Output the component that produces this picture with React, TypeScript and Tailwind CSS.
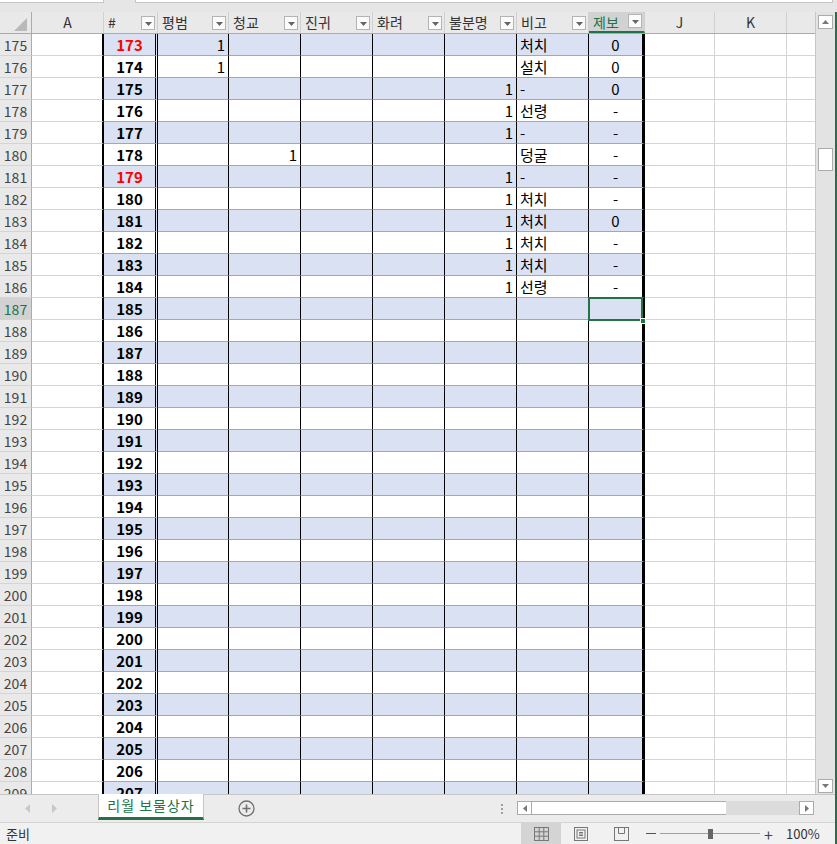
import React from 'react';

type Rec = { r: number; n: number; red?: boolean; p?: string; c?: string; u?: string; note?: string; rep?: string };

const data: Rec[] = [
  { r: 175, n: 173, red: true, p: '1', note: '처치', rep: '0' },
  { r: 176, n: 174, p: '1', note: '설치', rep: '0' },
  { r: 177, n: 175, u: '1', note: '-', rep: '0' },
  { r: 178, n: 176, u: '1', note: '선령', rep: '-' },
  { r: 179, n: 177, u: '1', note: '-', rep: '-' },
  { r: 180, n: 178, c: '1', note: '덩굴', rep: '-' },
  { r: 181, n: 179, red: true, u: '1', note: '-', rep: '-' },
  { r: 182, n: 180, u: '1', note: '처치', rep: '-' },
  { r: 183, n: 181, u: '1', note: '처치', rep: '0' },
  { r: 184, n: 182, u: '1', note: '처치', rep: '-' },
  { r: 185, n: 183, u: '1', note: '처치', rep: '-' },
  { r: 186, n: 184, u: '1', note: '선령', rep: '-' },
];
for (let r = 187; r <= 209; r++) data.push({ r, n: r - 2 });

const midWidths = ['w-[71px]', 'w-[72px]', 'w-[72px]', 'w-[72px]', 'w-[72px]', 'w-[72px]'];

const FilterBtn = () => (
  <div className="absolute right-[2px] bottom-[3px] w-[14px] h-[14px] border border-[#b4b4b4] bg-[#fbfbfb] flex items-end justify-center pb-[3px]">
    <svg width="7" height="4" viewBox="0 0 7 4">
      <polygon points="0,0 7,0 3.5,4" fill="#666" />
    </svg>
  </div>
);

const HeadCell = ({ label, w, sel }: { label: string; w: string; sel?: boolean }) => (
  <div
    className={`${w} relative shrink-0 h-full border-r border-[#d0d0d0] pl-[4px] pt-[3px] text-[14px] leading-none ${
      sel ? 'bg-[#d2d2d2] text-[#217346] border-b-2 border-b-[#217346]' : 'text-[#333]'
    }`}
  >
    {label}
    <FilterBtn />
  </div>
);

function Row({ d }: { d: Rec }) {
  const band = d.r % 2 === 1;
  const fill = band ? 'bg-[#d9e1f2]' : 'bg-white';
  const sel = d.r === 187;
  const mids = [d.p, d.c, '', '', d.u];
  return (
    <div className="flex h-[22px] shrink-0 text-[15px] leading-none text-black">
      <div
        className={`w-[32px] shrink-0 flex items-center justify-center border-r border-b border-r-[#ababab] border-b-[#d4d4d4] text-[14px] ${
          sel ? 'bg-[#d2d2d2] text-[#217346]' : 'bg-[#e9e9e9] text-[#444]'
        }`}
      >
        {d.r}
      </div>
      <div className="w-[72px] shrink-0 bg-white border-b border-b-[#d4d4d4] border-r-2 border-r-black" />
      <div
        className={`w-[54px] shrink-0 flex items-center justify-center font-bold border-b border-b-[#8ea9db] border-r-[3px] border-r-black border-double ${fill} ${
          d.red ? 'text-[#ff0000]' : 'text-black'
        }`}
      >
        {d.n}
      </div>
      {mids.map((v, i) => (
        <div
          key={i}
          className={`${midWidths[i]} shrink-0 flex items-center justify-end pr-[3px] border-b border-b-[#8ea9db] border-r border-r-black ${fill}`}
        >
          {v}
        </div>
      ))}
      <div className={`w-[72px] shrink-0 flex items-center pl-[3px] border-b border-b-[#8ea9db] border-r border-r-black ${fill}`}>
        {d.note}
      </div>
      <div className={`relative w-[56px] shrink-0 flex items-center justify-center border-b border-b-[#8ea9db] border-r-[3px] border-r-black ${fill}`}>
        {d.rep}
        {sel && (
          <>
            <div className="absolute z-10 -left-[1px] -top-[1px] right-[-1px] bottom-[-2px] border-2 border-[#217346]" />
            <div className="absolute z-20 right-[-4px] bottom-[-5px] w-[6px] h-[6px] bg-[#217346] border border-white" />
          </>
        )}
      </div>
      <div className="w-[70px] shrink-0 bg-white border-b border-r border-[#d4d4d4]" />
      <div className="w-[72px] shrink-0 bg-white border-b border-r border-[#d4d4d4]" />
      <div className="flex-1 bg-white border-b border-[#d4d4d4]" />
    </div>
  );
}

const ArrowBox = ({ dir }: { dir: 'up' | 'down' | 'left' | 'right' }) => {
  const pts = {
    up: '0,4 7,4 3.5,0',
    down: '0,0 7,0 3.5,4',
    left: '4,0 4,7 0,3.5',
    right: '0,0 0,7 4,3.5',
  }[dir];
  const vert = dir === 'up' || dir === 'down';
  return (
    <div className="w-[15px] h-[14px] shrink-0 bg-white border border-[#ababab] flex items-center justify-center">
      <svg width={vert ? 7 : 4} height={vert ? 4 : 7} viewBox={vert ? '0 0 7 4' : '0 0 4 7'}>
        <polygon points={pts} fill="#777" />
      </svg>
    </div>
  );
};

export default function App() {
  return (
    <div className="w-[837px] h-[844px] overflow-hidden flex flex-col bg-[#e6e6e6] font-['Noto_Sans_CJK_KR',sans-serif]">
      {/* formula bar remains */}
      <div className="h-[12px] shrink-0 flex items-start">
        <div className="w-[104px] h-[3px] bg-white border-b border-r border-[#c6c6c6]" />
        <div className="ml-[31px] w-[698px] h-[3px] bg-white border-b border-x border-[#c6c6c6]" />
      </div>

      <div className="flex-1 flex flex-col border-r-2 border-[#217346] min-h-0">
        <div className="flex h-[782px] shrink-0">
          {/* sheet */}
          <div className="w-[815px] shrink-0 flex flex-col overflow-hidden bg-white">
            <div className="flex h-[22px] shrink-0 bg-[#e9e9e9] border-b border-[#ababab]">
              <div className="w-[32px] shrink-0 h-full border-r border-[#ababab] flex items-end justify-end pr-[4px] pb-[2px]">
                <svg width="13" height="13" viewBox="0 0 13 13">
                  <polygon points="13,0 13,13 0,13" fill="#b9b9b9" />
                </svg>
              </div>
              <div className="w-[72px] shrink-0 h-full border-r border-[#d0d0d0] flex items-center justify-center text-[14px] text-[#333]">A</div>
              <HeadCell label="#" w="w-[54px]" />
              <HeadCell label="평범" w="w-[71px]" />
              <HeadCell label="청교" w="w-[72px]" />
              <HeadCell label="진귀" w="w-[72px]" />
              <HeadCell label="화려" w="w-[72px]" />
              <HeadCell label="불분명" w="w-[72px]" />
              <HeadCell label="비고" w="w-[72px]" />
              <HeadCell label="제보" w="w-[56px]" sel />
              <div className="w-[70px] shrink-0 h-full border-r border-[#d0d0d0] flex items-center justify-center text-[14px] text-[#333]">J</div>
              <div className="w-[72px] shrink-0 h-full border-r border-[#d0d0d0] flex items-center justify-center text-[14px] text-[#333]">K</div>
              <div className="flex-1" />
            </div>
            {data.map((d) => (
              <Row key={d.r} d={d} />
            ))}
          </div>

          {/* vertical scrollbar */}
          <div className="flex-1 flex flex-col items-center bg-[#e3e3e3] border-l border-[#c6c6c6]">
            <div className="mt-[3px]">
              <ArrowBox dir="up" />
            </div>
            <div className="mt-[119px] w-[15px] h-[23px] bg-white border border-[#ababab]" />
            <div className="flex-1" />
            <div className="mb-[1px]">
              <ArrowBox dir="down" />
            </div>
          </div>
        </div>

        {/* sheet tabs bar */}
        <div className="h-[28px] shrink-0 flex bg-[#ececec] border-t border-[#c6c6c6]">
          <div className="w-[98px] shrink-0 flex items-center gap-[22px] pl-[25px]">
            <svg width="5" height="9" viewBox="0 0 5 9">
              <polygon points="5,0 5,9 0,4.5" fill="#c8c8c8" />
            </svg>
            <svg width="5" height="9" viewBox="0 0 5 9">
              <polygon points="0,0 0,9 5,4.5" fill="#c8c8c8" />
            </svg>
          </div>
          <div className="w-[106px] h-[26px] shrink-0 -mt-[1px] bg-white border-x border-[#c6c6c6] border-b-[3px] border-b-[#217346] flex items-center justify-center text-[14px] text-[#217346] tracking-[1px]">
            리월 보물상자
          </div>
          <div className="ml-[34px] shrink-0 flex items-center">
            <svg width="17" height="17" viewBox="0 0 17 17">
              <circle cx="8.5" cy="8.5" r="7.5" fill="none" stroke="#707070" strokeWidth="1.3" />
              <path d="M8.5 4.5v8M4.5 8.5h8" stroke="#707070" strokeWidth="1.6" />
            </svg>
          </div>
          <div className="ml-[246px] shrink-0 flex flex-col justify-center gap-[2px]">
            <div className="w-[2px] h-[2px] bg-[#a0a0a0]" />
            <div className="w-[2px] h-[2px] bg-[#a0a0a0]" />
            <div className="w-[2px] h-[2px] bg-[#a0a0a0]" />
          </div>
          <div className="ml-[14px] w-[297px] h-[14px] mt-[6px] shrink-0 flex">
            <ArrowBox dir="left" />
            <div className="w-[194px] h-full bg-white border-y border-[#ababab]" />
            <div className="flex-1 h-full bg-[#dcdcdc]" />
            <ArrowBox dir="right" />
          </div>
        </div>

        {/* status bar */}
        <div className="h-[22px] shrink-0 flex items-center bg-[#f1f1f1] border-t border-[#d4d4d4] text-[13px] text-[#333]">
          <div className="w-[521px] shrink-0 pl-[6px]">준비</div>
          <div className="w-[40px] h-full shrink-0 bg-[#d4d4d4] flex items-center justify-center">
            <svg width="15" height="14" viewBox="0 0 15 14">
              <rect x="0.5" y="0.5" width="14" height="13" fill="none" stroke="#777" />
              <path d="M5.2 0.5v13M9.8 0.5v13M0.5 4.8h14M0.5 9.2h14" stroke="#777" />
            </svg>
          </div>
          <div className="w-[40px] h-full shrink-0 flex items-center justify-center">
            <svg width="14" height="14" viewBox="0 0 14 14">
              <rect x="0.5" y="0.5" width="13" height="13" fill="none" stroke="#777" />
              <rect x="3" y="3" width="8" height="8" fill="none" stroke="#777" />
              <path d="M5 5.5h4M5 7h4M5 8.5h4" stroke="#777" />
            </svg>
          </div>
          <div className="w-[40px] h-full shrink-0 flex items-center justify-center">
            <svg width="15" height="14" viewBox="0 0 15 14">
              <rect x="0.5" y="0.5" width="14" height="13" fill="none" stroke="#777" />
              <path d="M4.5 0.5v6h6v-6" fill="none" stroke="#777" />
            </svg>
          </div>
          <div className="ml-[5px] w-[10px] h-[1px] bg-[#555]" />
          <div className="ml-[4px] w-[100px] h-[10px] relative flex items-center">
            <div className="w-full h-[1px] bg-[#a0a0a0]" />
            <div className="absolute left-[48px] top-0 w-[5px] h-[10px] bg-[#666]" />
          </div>
          <div className="ml-[4px] w-[10px] text-[16px] leading-none text-[#444]">+</div>
          <div className="ml-[12px]">100%</div>
        </div>
      </div>
    </div>
  );
}
